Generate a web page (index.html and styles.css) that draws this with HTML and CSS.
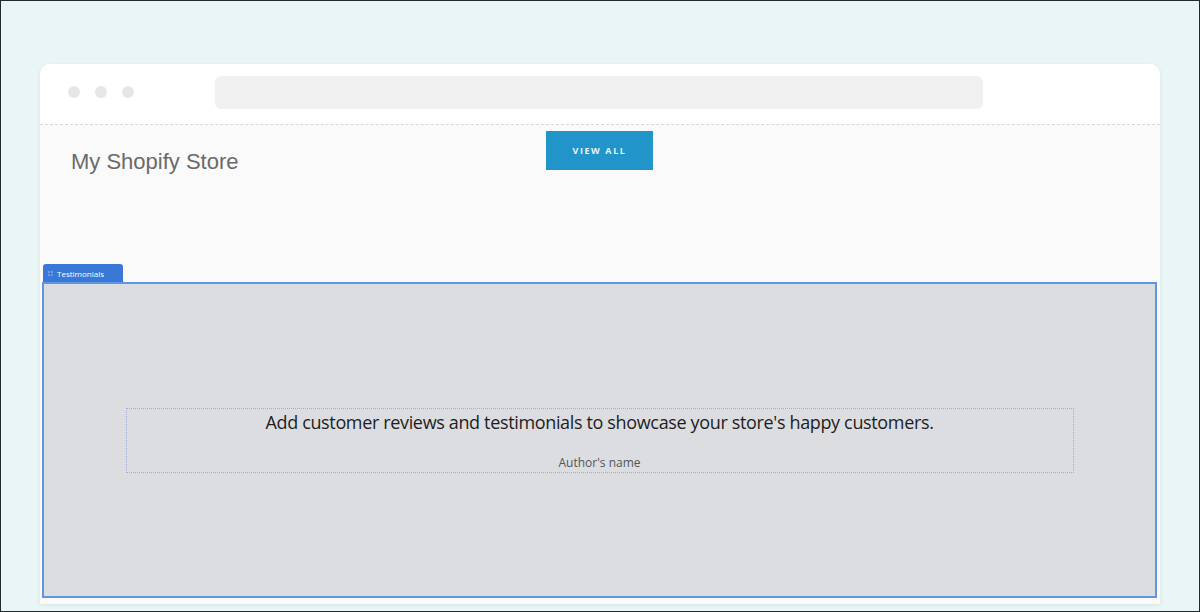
FILE: index.html
```html
<!DOCTYPE html>
<html lang="en">
<head>
  <meta charset="UTF-8">
  <title>My Shopify Store - Testimonials</title>
  <link rel="stylesheet" href="styles.css">
</head>
<body>

<div class="frame">
  <div class="browser">
    <div class="browser-bar">
      <div class="dots">
        <span class="dot"></span>
        <span class="dot"></span>
        <span class="dot"></span>
      </div>
      <div class="address"></div>
    </div>

    <div class="store">
      <div class="store-header">
        <div class="store-title">My Shopify Store</div>
        <button class="view-all">VIEW ALL</button>
        <div></div>
      </div>

      <!-- section selectionnee dans l'editeur -->
      <div class="section-selected">
        <div class="section-tag">
          <svg class="handle" width="5" height="5" viewBox="0 0 5 5">
            <circle cx="1" cy="1" r="0.8" fill="#b9d0f3"/>
            <circle cx="4" cy="1" r="0.8" fill="#b9d0f3"/>
            <circle cx="1" cy="4" r="0.8" fill="#b9d0f3"/>
            <circle cx="4" cy="4" r="0.8" fill="#b9d0f3"/>
          </svg>
          Testimonials
        </div>
        <div class="testimonial">
          <p class="quote">Add customer reviews and testimonials to showcase your store's happy customers.</p>
          <p class="author">Author's name</p>
        </div>
      </div>
    </div>
  </div>
</div>

</body>
</html>
```

FILE: styles.css
```css
html, body {
  margin: 0;
  padding: 0;
}

body {
  font-family: "Liberation Sans", Arial, sans-serif;
  background-color: #eaf5f5;
}

.frame {
  box-sizing: border-box;
  width: 1200px;
  height: 612px;
  border: 1px solid #1f2b2b;
  padding: 63px 0 0 39px;
  overflow: hidden;
  background-color: #eaf5f5;
}

.browser {
  width: 1120px;
  height: 540px;
  background: #fafafa;
  border-radius: 10px 10px 0 0;
  box-shadow: 0 1px 4px rgba(0, 0, 0, 0.08);
  overflow: hidden;
  display: flex;
  flex-direction: column;
}

.browser-bar {
  height: 56px;
  padding-bottom: 4px;
  background: #ffffff;
  border-bottom: 1px dashed #d6d6d6;
  display: flex;
  align-items: center;
  flex-shrink: 0;
}

.dots {
  display: flex;
  gap: 15px;
  padding-left: 28px;
  width: 147px;
}

.dot {
  width: 12px;
  height: 12px;
  border-radius: 50%;
  background: #e6e6e6;
}

.address {
  width: 768px;
  height: 33px;
  border-radius: 6px;
  background: #f0f0f0;
}

.store {
  flex: 1;
  display: flex;
  flex-direction: column;
  padding: 0 3px 0 2px;
}

.store-header {
  height: 157px;
  flex-shrink: 0;
  display: grid;
  grid-template-columns: 1fr auto 1fr;
  align-items: start;
}

.store-title {
  margin: 24px 0 0 29px;
  font-size: 22px;
  color: #6a6a6a;
}

.view-all {
  margin-top: 6px;
  width: 107px;
  height: 39px;
  border: none;
  background: #2194c9;
  color: #e9f5fb;
  font-family: "Open Sans", sans-serif;
  font-size: 9px;
  font-weight: bold;
  letter-spacing: 1.6px;
  cursor: pointer;
}

.section-selected {
  position: relative;
  height: 316px;
  flex-shrink: 0;
  box-sizing: border-box;
  border: 2px solid #5f96e2;
  background: #dcdde1;
  display: flex;
  align-items: center;
  justify-content: center;
}

.section-tag {
  position: absolute;
  top: -20px;
  left: -1px;
  height: 18px;
  width: 80px;
  box-sizing: border-box;
  padding-left: 5px;
  background: #3a78d7;
  border-radius: 3px 3px 0 0;
  color: #fff;
  font-family: "Open Sans", sans-serif;
  font-size: 8px;
  display: flex;
  align-items: center;
  gap: 4px;
}

.testimonial {
  width: 948px;
  height: 65px;
  box-sizing: border-box;
  border: 1px dotted #a4aec8;
  text-align: center;
  padding-top: 1px;
}

.quote {
  margin: 0;
  font-family: "Open Sans", sans-serif;
  font-size: 18px;
  font-weight: 500;
  letter-spacing: -0.35px;
  color: #1e1e1e;
}

.author {
  margin: 20px 0 0;
  font-family: "Open Sans", sans-serif;
  font-size: 12px;
  color: #555;
}
```
